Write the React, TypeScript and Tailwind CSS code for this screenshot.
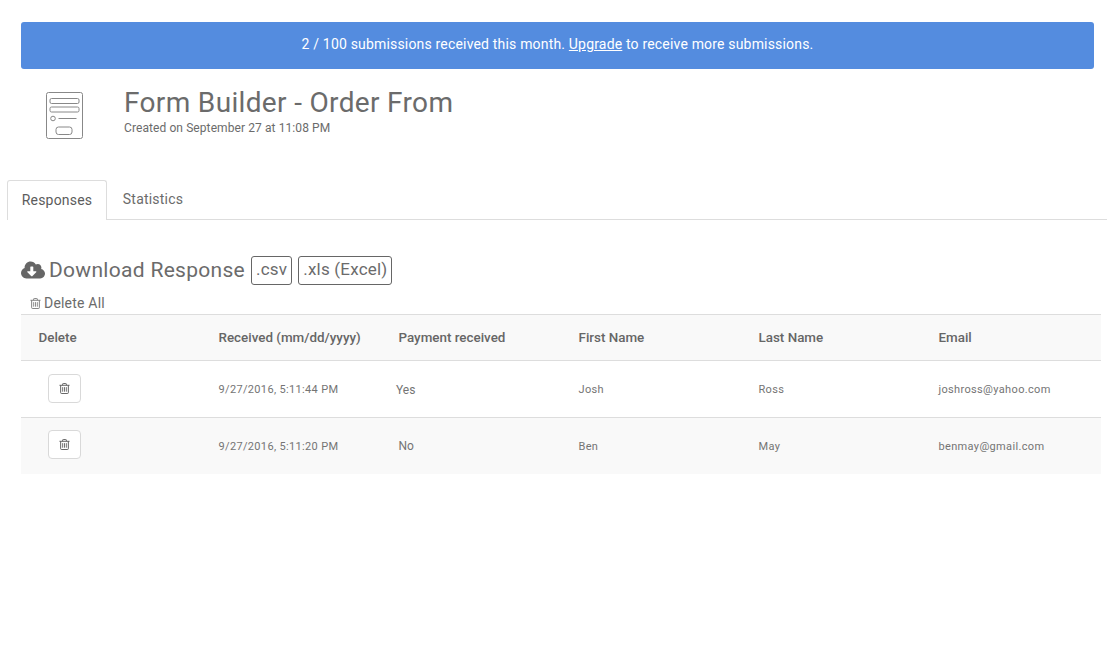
import { FaCloudDownloadAlt } from "react-icons/fa";

const font = { fontFamily: "Roboto, sans-serif" };

const rows = [
  { received: "9/27/2016, 5:11:44 PM", paid: "Yes", first: "Josh", last: "Ross", email: "joshross@yahoo.com" },
  { received: "9/27/2016, 5:11:20 PM", paid: "No", first: "Ben", last: "May", email: "benmay@gmail.com" },
];

function FormIcon() {
  return (
    <svg width="38" height="48" viewBox="0 0 38 48" fill="none" stroke="#888" strokeWidth="1">
      <rect x="1.5" y="0.5" width="36" height="46" rx="2" />
      <rect x="5" y="6.5" width="29" height="5" rx="1.5" />
      <rect x="5" y="15" width="29" height="5" rx="1.5" />
      <circle cx="8" cy="26.5" r="2.3" />
      <path d="M13.5 26.5h18" />
      <rect x="11" y="35" width="16" height="7.5" rx="2.5" />
    </svg>
  );
}

function TrashIcon({ size, color }: { size: number; color: string }) {
  return (
    <svg width={size} height={size} viewBox="0 0 12 12" fill="none" stroke={color} strokeWidth="1">
      <path d="M0.5 2.5h11" />
      <path d="M4 2.5V1.2q0-.7.7-.7h2.6q.7 0 .7.7v1.3" />
      <path d="M1.8 2.5v8q0 1 1 1h6.4q1 0 1-1v-8" />
      <path d="M4 4.5v5M6 4.5v5M8 4.5v5" strokeWidth="0.9" />
    </svg>
  );
}

function DeleteButton() {
  return (
    <button className="mb-[2px] flex h-[29px] w-[33px] items-center justify-center rounded-[4px] border border-[#d9d9d9] bg-white">
      <TrashIcon size={11} color="#555" />
    </button>
  );
}

export default function App() {
  return (
    <div className="h-[663px] w-[1114px] overflow-hidden bg-white text-[#6b6b6b]" style={font}>
      <div className="ml-[21px] mr-[20px] pt-[22px]">
        <div className="flex h-[47px] items-center justify-center rounded-[3px] bg-[#548cdf] pb-[3px] text-[14px] tracking-[0.18px] text-white">
          <span>
            2 / 100 submissions received this month. <span className="underline">Upgrade</span> to receive more
            submissions.
          </span>
        </div>
      </div>

      <div className="mt-[18px] ml-[45px] flex">
        <div className="mt-[5px] w-[79px]">
          <FormIcon />
        </div>
        <div>
          <h1 className="text-[28px] leading-[32px] font-normal tracking-[0.34px]">Form Builder - Order From</h1>
          <p className="mt-[1px] text-[12px] leading-[17px] tracking-[0.09px]">Created on September 27 at 11:08 PM</p>
        </div>
      </div>

      <div className="mt-[40px] ml-[7px] flex h-[40px] w-[1100px] border-b border-[#ddd] text-[14px] tracking-[0.2px]">
        <div className="flex h-[40px] w-[100px] items-center justify-center rounded-t-[3px] border border-b-0 border-[#ddd] bg-white pb-[1px] text-[#5c5c5c]">
          Responses
        </div>
        <div className="flex h-[39px] w-[92px] items-center justify-center">Statistics</div>
      </div>

      <div className="mt-[36px] ml-[21px] flex h-[30px] items-center">
        <FaCloudDownloadAlt className="mb-[2px] text-[24px] text-[#666]" />
        <span className="ml-[4px] text-[21px] tracking-[0.3px]">Download Response</span>
        <span className="mb-[2px] ml-[6px] flex h-[29px] items-center rounded-[3px] border border-[#666] px-[4px] text-[17px] tracking-[0.2px]">
          .csv
        </span>
        <span className="mb-[2px] ml-[6px] flex h-[29px] items-center rounded-[3px] border border-[#666] px-[4px] text-[17px] tracking-[0.2px]">
          .xls (Excel)
        </span>
      </div>

      <div className="mt-[6px] ml-[30px] flex h-[22px] items-center text-[14px] tracking-[0.2px]">
        <span className="mr-[3px]">
          <TrashIcon size={11} color="#777" />
        </span>
        Delete All
      </div>

      <table className="ml-[21px] w-[1080px] table-fixed border-collapse text-[11px] tracking-[0.34px] text-[#747474]">
        <thead>
          <tr className="h-[46px] border-y border-[#ddd] bg-[#f9f9f9] text-left text-[13.4px] tracking-normal text-[#666]">
            <th className="w-[180px] pt-[2px] pl-[17.5px] font-medium">Delete</th>
            <th className="w-[180px] pt-[2px] pl-[17.5px] font-medium">Received (mm/dd/yyyy)</th>
            <th className="w-[180px] pt-[2px] pl-[17.5px] font-medium">Payment received</th>
            <th className="w-[180px] pt-[2px] pl-[17.5px] font-medium">First Name</th>
            <th className="w-[180px] pt-[2px] pl-[17.5px] font-medium">Last Name</th>
            <th className="w-[180px] pt-[2px] pl-[17.5px] font-medium">Email</th>
          </tr>
        </thead>
        <tbody>
          {rows.map((r, i) => (
            <tr key={r.email} className={i === 0 ? "h-[57px] border-b border-[#ddd]" : "h-[56px] bg-[#f9f9f9]"}>
              <td className="pl-[27px]">
                <DeleteButton />
              </td>
              <td className="pt-[2px] pl-[17.5px]">{r.received}</td>
              <td className={i === 0 ? "pt-[2px] pl-[15px] text-[12px] tracking-normal" : "pt-[1px] pl-[17.5px] text-[12px] tracking-normal"}>
                {r.paid}
              </td>
              <td className="pt-[2px] pl-[17.5px]">{r.first}</td>
              <td className="pt-[2px] pl-[17.5px]">{r.last}</td>
              <td className="pt-[2px] pl-[17.5px]">{r.email}</td>
            </tr>
          ))}
        </tbody>
      </table>
    </div>
  );
}
